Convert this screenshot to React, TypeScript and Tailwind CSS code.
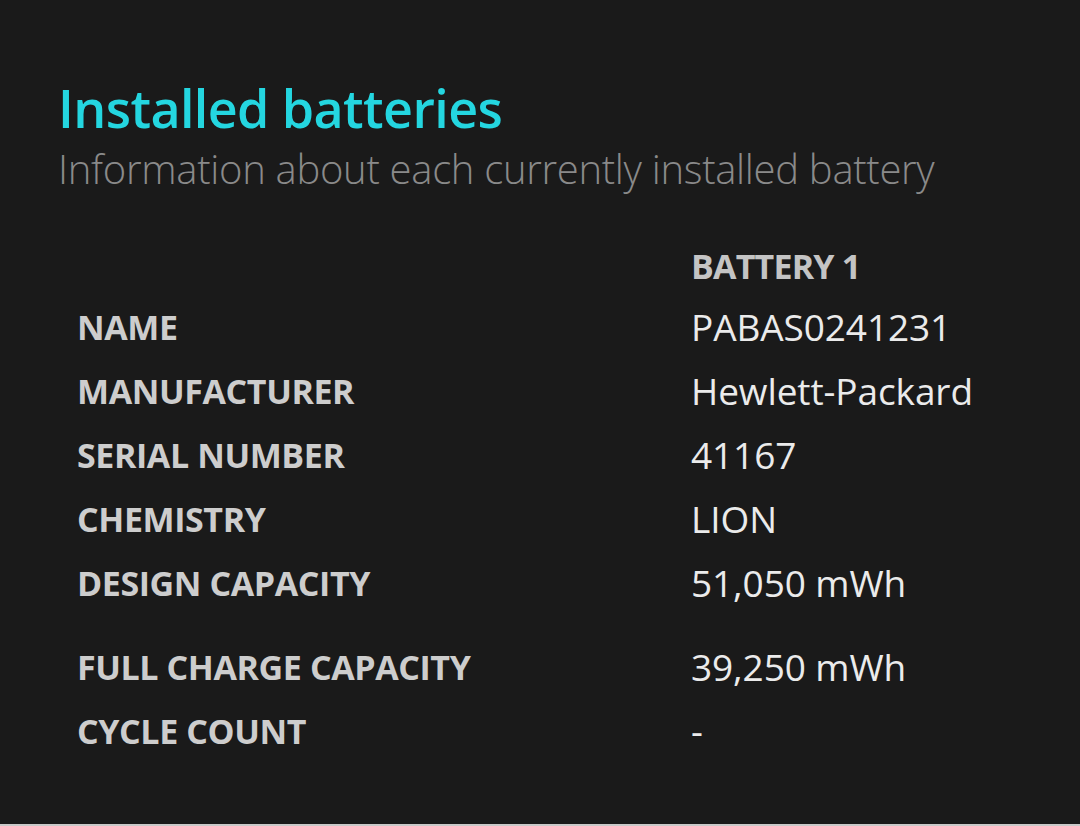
import React from "react";

const rows: { label: string; value: string; gap?: boolean }[] = [
  { label: "NAME", value: "PABAS0241231" },
  { label: "MANUFACTURER", value: "Hewlett-Packard" },
  { label: "SERIAL NUMBER", value: "41167" },
  { label: "CHEMISTRY", value: "LION" },
  { label: "DESIGN CAPACITY", value: "51,050 mWh" },
  { label: "FULL CHARGE CAPACITY", value: "39,250 mWh", gap: true },
  { label: "CYCLE COUNT", value: "-" },
];

export default function App() {
  return (
    <div
      className="w-[1080px] h-[826px] bg-[#1a1a1a] border-b-2 border-[#c9c9c9] overflow-hidden"
      style={{ fontFamily: '"Open Sans", "Noto Sans", "Liberation Sans", sans-serif' }}
    >
      <div className="pl-[58px] pt-[77px]">
        <h1 className="text-[52px] leading-[62px] font-semibold text-[#24d6e0] tracking-[-0.6px]">
          Installed batteries
        </h1>
        <p className="mt-[5px] text-[40px] leading-[50px] font-light text-[#8a8a8a] tracking-[-0.3px]">
          Information about each currently installed battery
        </p>
        <div className="mt-[39px] ml-[19px] grid grid-cols-[614px_1fr]">
          <div className="h-[62px]" />
          <div className="h-[62px] pt-[4px] flex items-center text-[34px] font-bold text-[#c4c4c4] tracking-[-0.8px]">
            BATTERY 1
          </div>
          {rows.map((r) => (
            <React.Fragment key={r.label}>
              <div
                className={`h-[64px] flex items-center text-[34px] font-bold text-[#cdcdcd] tracking-[-0.4px] ${
                  r.gap ? "mt-[20px]" : ""
                }`}
              >
                {r.label}
              </div>
              <div
                className={`h-[64px] flex items-center text-[37px] font-normal text-[#ebebeb] tracking-[-0.1px] ${
                  r.gap ? "mt-[20px]" : ""
                }`}
              >
                {r.value}
              </div>
            </React.Fragment>
          ))}
        </div>
      </div>
    </div>
  );
}
